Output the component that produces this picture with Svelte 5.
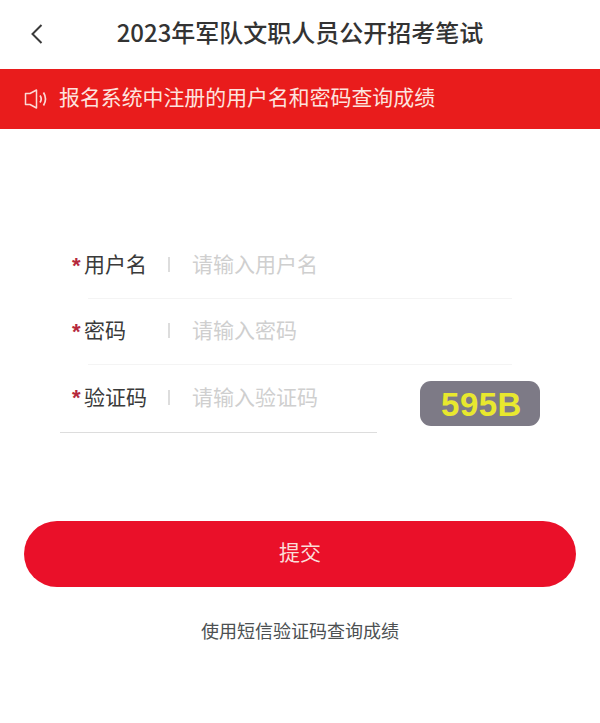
<script>
	const fields = [
		{ label: '用户名', hint: '请输入用户名' },
		{ label: '密码', hint: '请输入密码' }
	];
</script>

<main>
	<header>
		<svg class="back" viewBox="0 0 14 20" width="14" height="20">
			<path d="M11.5 1 L2.5 10 L11.5 19" fill="none" stroke="#3a3a3a" stroke-width="2" />
		</svg>
		<h1>2023年军队文职人员公开招考笔试</h1>
	</header>

	<div class="notice">
		<svg viewBox="0 0 24 22" width="24" height="22">
			<path d="M1.5 5.5 H6 L12.5 2 V20 L6 16.5 H1.5 Z" fill="none" stroke="#fbd9d5" stroke-width="1.5" stroke-linejoin="round" />
			<path d="M16 7.5 Q18.5 11 16 14.5 M19.5 4.5 Q23.5 11 19.5 17.5" fill="none" stroke="#fbd9d5" stroke-width="1.7" />
		</svg>
		<span>报名系统中注册的用户名和密码查询成绩</span>
	</div>

	<form>
		{#each fields as f}
			<div class="row">
				<span class="star">*</span>
				<label>{f.label}</label>
				<i class="sep"></i>
				<span class="hint">{f.hint}</span>
			</div>
		{/each}
		<div class="code-row">
			<div class="row last">
				<span class="star">*</span>
				<label>验证码</label>
				<i class="sep"></i>
				<span class="hint">请输入验证码</span>
			</div>
			<div class="captcha">595B</div>
		</div>
	</form>

	<button type="button">提交</button>
	<p class="sms">使用短信验证码查询成绩</p>
</main>

<style>
:global(body) {
	margin: 0;
	background: #fff;
}

main {
	width: 600px;
	height: 723px;
	overflow: hidden;
	font-family: "Noto Sans CJK SC", "Liberation Sans", sans-serif;
	color: #333;
}

header {
	height: 69px;
	display: flex;
	align-items: center;
	justify-content: center;
	position: relative;
}

.back {
	position: absolute;
	left: 30px;
	top: 24px;
}

h1 {
	margin: 0 0 7px;
	font-size: 24px;
	font-weight: 500;
	color: #333;
}

.notice {
	height: 60px;
	background: #e91c1c;
	display: flex;
	align-items: center;
	padding-left: 24px;
	gap: 11px;
	color: #fde3df;
	font-size: 20.9px;
}

.notice span {
	margin-bottom: 6px;
}

form {
	padding-top: 104px;
}

.row {
	height: 66px;
	margin: 0 88px;
	width: 424px;
	box-sizing: border-box;
	border-bottom: 1px solid #f4f4f4;
	display: flex;
	align-items: center;
	position: relative;
	font-size: 21px;
}

.star {
	position: absolute;
	left: -16px;
	top: 20px;
	color: #b5283c;
	font-size: 22px;
	font-weight: 700;
	font-family: "Liberation Sans", sans-serif;
}

label {
	margin-left: -4px;
	margin-bottom: 6px;
	width: 84px;
	color: #3a3a3a;
}

.sep {
	width: 2px;
	height: 15px;
	background: #ddd;
	margin-right: 23px;
	margin-bottom: 2px;
}

.hint {
	color: #cfcfcf;
	margin-bottom: 6px;
	margin-left: -1px;
}

.code-row {
	display: flex;
	align-items: center;
	position: relative;
}

.row.last {
	width: 317px;
	margin: 0 0 0 60px;
	padding-left: 28px;
	border-bottom: 1px solid #ddd;
	height: 68px;
}

.row.last .star {
	left: 12px;
}

.captcha {
	position: absolute;
	left: 420px;
	top: 16px;
	width: 120px;
	height: 45px;
	padding: 2px 0 0 3px;
	box-sizing: border-box;
	border-radius: 11px;
	background: #7d7a86;
	color: #e8e82e;
	font-family: "Liberation Sans", sans-serif;
	font-weight: 700;
	font-size: 33px;
	letter-spacing: 0.5px;
	display: flex;
	align-items: center;
	justify-content: center;
}

button {
	display: block;
	width: 552px;
	height: 66px;
	margin: 88px 24px 0;
	padding: 0 0 6px;
	border: 0;
	border-radius: 33px;
	background: #ea1029;
	color: #fbdcd8;
	font-family: inherit;
	font-size: 21px;
}

.sms {
	margin: 30px 0 0;
	text-align: center;
	font-size: 18px;
	color: #4c5052;
}
</style>
